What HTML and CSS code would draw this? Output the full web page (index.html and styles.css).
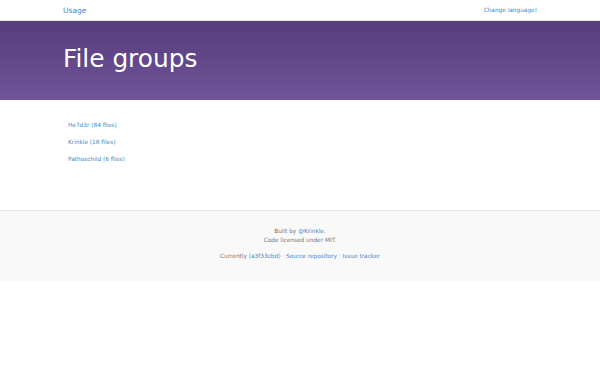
FILE: index.html
```html
<!DOCTYPE html>
<html>
<head>
  <title>File groups</title>
  <link rel="stylesheet" href="styles.css">
</head>
<body>
  <div class="navbar">
    <div class="container nav-inner">
      <a href="#" class="brand">Usage</a>
      <a href="#" class="lang">Change language!</a>
    </div>
  </div>

  <div class="hero">
    <div class="container">
      <h1>File groups</h1>
    </div>
  </div>

  <div class="container main">
    <ul class="groups">
      <li><a href="#">He7d3r (84 files)</a></li>
      <li><a href="#">Krinkle (18 files)</a></li>
      <li><a href="#">Pathoschild (6 files)</a></li>
    </ul>
  </div>

  <div class="footer">
    <p>Built by <a href="#">@Krinkle</a>.<br>Code licensed under MIT.</p>
    <p>Currently <a href="#">(a3f33cbd)</a> · <a href="#">Source repository</a> · <a href="#">Issue tracker</a></p>
  </div>
</body>
</html>
```

FILE: styles.css
```css
body {
  margin: 0;
  font-family: "DejaVu Sans", sans-serif;
  color: #555;
  background: #fff;
}

a {
  color: #428bca;
  text-decoration: none;
}

.container {
  width: 474px;
  margin: 0 auto;
}

.navbar {
  height: 20px;
  border-bottom: 1px solid #e5e5e5;
}

.nav-inner {
  display: flex;
  justify-content: space-between;
  align-items: center;
  height: 20px;
}

.brand {
  font-size: 7.5px;
}

.lang {
  font-size: 5.8px;
}

.hero {
  height: 75px;
  padding-bottom: 4px;
  background: linear-gradient(to bottom, #563d7c 0, #6f5499 100%);
  display: flex;
  align-items: center;
}

.hero h1 {
  margin: 0;
  color: #fff;
  font-size: 24.8px;
  font-weight: normal;
}

.main {
  padding: 21px 0 38px;
  height: 51px;
}

.groups {
  list-style: none;
  margin: 0;
  padding: 0 0 0 5px;
  display: flex;
  flex-direction: column;
  gap: 9px;
}

.groups li {
  font-size: 5.8px;
  line-height: 8px;
}

.footer {
  border-top: 1px solid #e5e5e5;
  background: #f9f9f9;
  height: 71px;
  text-align: center;
  font-size: 5.8px;
  color: #777;
}

.footer p {
  margin: 0;
  line-height: 9px;
}

.footer p:first-child {
  padding-top: 16px;
  padding-bottom: 7px;
}
```
